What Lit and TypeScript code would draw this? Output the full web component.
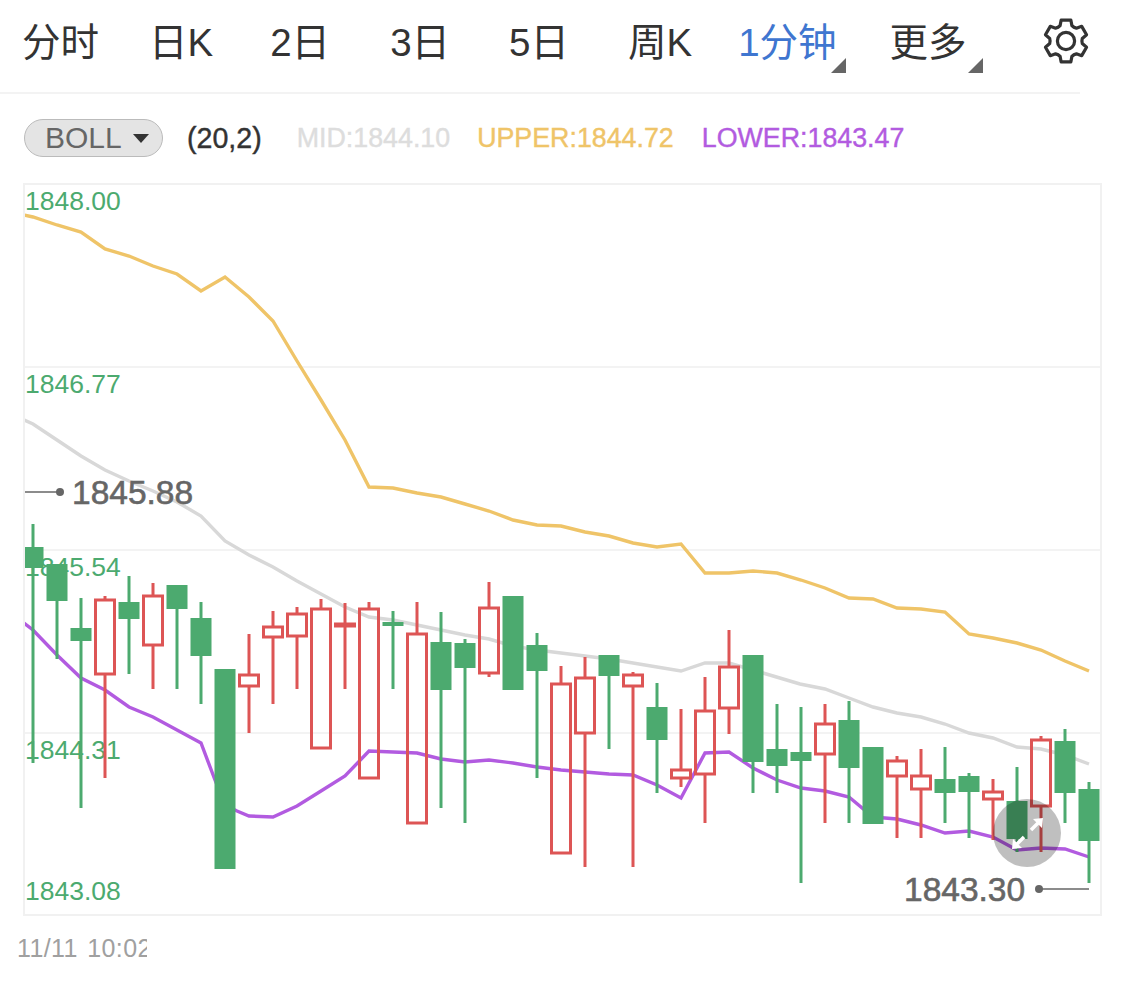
import { LitElement, html, svg, css } from "lit";
import { customElement } from "lit/decorators.js";

// wickTop, wickBottom, bodyTop, bodyBottom, up (red = hollow)
type Candle = [number, number, number, number, boolean];

const CANDLES: Candle[] = [
  [524, 763, 547, 568, false],
  [564, 659, 564, 601, false],
  [598, 808, 628, 641, false],
  [596, 778, 599, 675, true],
  [576, 674, 602, 619, false],
  [583, 689, 595, 646, true],
  [585, 689, 585, 609, false],
  [602, 704, 618, 656, false],
  [669, 869, 669, 869, false],
  [634, 733, 674, 687, true],
  [611, 704, 626, 638, true],
  [607, 689, 613, 637, true],
  [599, 749, 608, 749, true],
  [603, 689, 623, 627, true],
  [602, 779, 608, 779, true],
  [611, 689, 622, 626, false],
  [602, 824, 633, 824, true],
  [612, 808, 642, 690, false],
  [639, 823, 643, 668, false],
  [582, 677, 607, 674, true],
  [596, 690, 596, 690, false],
  [633, 778, 645, 671, false],
  [666, 854, 683, 854, true],
  [657, 867, 677, 734, true],
  [655, 749, 655, 676, false],
  [672, 867, 674, 687, true],
  [683, 793, 707, 740, false],
  [709, 787, 769, 779, true],
  [677, 823, 710, 775, true],
  [630, 734, 666, 709, true],
  [655, 793, 655, 762, false],
  [704, 793, 749, 766, false],
  [707, 883, 752, 761, false],
  [704, 823, 723, 755, true],
  [701, 823, 720, 768, false],
  [747, 824, 747, 824, false],
  [756, 838, 760, 777, true],
  [749, 838, 775, 790, true],
  [747, 823, 779, 793, false],
  [773, 838, 776, 792, false],
  [779, 840, 791, 800, true],
  [767, 852, 801, 839, false],
  [736, 852, 739, 807, true],
  [729, 823, 741, 793, false],
  [782, 883, 789, 841, false],
];

const UPPER =
  "24,215 33,217 57,225 81,232 105,249 129,256 153,266 177,274 201,291 225,277 249,297 273,321 297,361 321,400 345,440 369,487 393,488 417,493 441,497 465,504 489,511 513,520 537,525 561,526 585,532 609,536 633,543 657,547 681,544 705,573 729,573 753,571 777,573 801,580 825,588 849,598 873,599 897,608 921,609 945,612 969,634 993,638 1017,643 1041,650 1065,661 1089,671";
const MID =
  "24,420 33,424 57,440 81,456 105,470 129,481 153,491 177,502 201,516 225,541 249,555 273,567 297,581 321,594 345,607 369,617 393,620 417,625 441,630 465,635 489,639 513,646 537,650 561,653 585,656 609,659 633,663 657,667 681,671 705,663 729,663 763,673 800,684 825,689 849,698 873,707 897,713 921,717 945,724 969,733 993,738 1017,747 1041,749 1065,755 1089,764";
const LOWER =
  "24,623 33,630 57,655 81,678 105,690 129,707 153,717 177,730 201,743 215,780 225,805 237,811 249,816 273,817 297,806 321,791 345,776 369,751 393,752 417,753 441,759 465,762 489,760 513,763 537,767 561,770 585,772 609,774 633,775 657,785 681,798 705,753 729,752 753,768 777,780 801,788 825,791 849,797 873,817 897,819 921,825 945,833 969,831 993,837 1017,850 1041,848 1065,849 1089,857";

const AXIS: [number, string][] = [
  [210, "1848.00"],
  [393, "1846.77"],
  [576, "1845.54"],
  [759, "1844.31"],
  [900, "1843.08"],
];

function gearPath(cx: number, cy: number) {
  const pt = (r: number, deg: number) => {
    const a = (deg * Math.PI) / 180;
    return `${(cx + r * Math.cos(a)).toFixed(2)} ${(cy + r * Math.sin(a)).toFixed(2)}`;
  };
  let d = "";
  for (let i = 0; i < 6; i++) {
    const c = -90 + i * 60;
    d += `${i ? "L" : "M"}${pt(16.5, c - 21)} L${pt(21.5, c - 13)} L${pt(21.5, c + 13)} L${pt(16.5, c + 21)} Q${pt(15.5, c + 30)} ${pt(16.5, c + 39)} `;
  }
  return d + "Z";
}

@customElement("app-root")
export class AppRoot extends LitElement {
  static styles = css`
    :host {
      display: block;
      width: 1125px;
      height: 983px;
      background: #fff;
      font-family: "Liberation Sans", "Noto Sans CJK SC", sans-serif;
      overflow: hidden;
    }
    .tabs {
      display: flex;
      align-items: center;
      box-sizing: border-box;
      width: 1080px;
      height: 94px;
      padding: 0 0 10px 22px;
      border-bottom: 2px solid #f3f3f3;
      font-size: 38.5px;
      color: #333;
    }
    .tab {
      position: relative;
      margin-bottom: -4px;
      line-height: 44px;
      white-space: nowrap;
    }
    .tab.active {
      color: #3f76d0;
    }
    .tab.menu::after {
      content: "";
      position: absolute;
      right: -16px;
      bottom: -8px;
      width: 0;
      height: 0;
      border-style: solid;
      border-width: 0 0 15px 15px;
      border-color: transparent transparent #666 transparent;
    }
    .tab.active.menu::after {
      right: -9px;
    }
    .gear {
      display: block;
      flex: none;
      width: 46px;
      height: 48px;
      margin-left: 76px;
    }
    .legend {
      display: flex;
      align-items: center;
      height: 38px;
      margin: 25px 0 26px 24px;
      font-size: 26.8px;
      white-space: nowrap;
      -webkit-text-stroke: 0.4px;
    }
    .pill {
      display: flex;
      align-items: center;
      box-sizing: border-box;
      width: 139px;
      height: 38px;
      padding-left: 20px;
      border: 1px solid #bbb;
      border-radius: 19px;
      background: #e4e4e4;
      color: #666;
      font-size: 30px;
      -webkit-text-stroke: 0;
    }
    .caret {
      width: 0;
      height: 0;
      margin-left: 11px;
      border-style: solid;
      border-width: 9px 8px 0 8px;
      border-color: #333 transparent transparent transparent;
    }
    .params {
      margin-left: 24px;
      color: #333;
      font-size: 28.6px;
    }
    .mid {
      margin-left: 35px;
      color: #ddd;
    }
    .upper {
      margin-left: 27px;
      color: #efc468;
    }
    .lower {
      margin-left: 28px;
      color: #b25be0;
    }
    .chart {
      box-sizing: border-box;
      width: 1079px;
      height: 733px;
      margin-left: 23px;
      border: 2px solid #f1f1f1;
    }
    .chart svg {
      display: block;
      width: 1075px;
      height: 729px;
    }
    .axis {
      font-size: 26.5px;
      fill: #4caa6f;
    }
    .price {
      font-size: 33.5px;
      fill: #666;
      stroke: #666;
      stroke-width: 0.6px;
    }
    .date {
      width: 130px;
      margin: 18px 0 0 17px;
      overflow: hidden;
      white-space: nowrap;
      font-size: 25px;
      letter-spacing: 0.4px;
      word-spacing: 2px;
      color: #a0a0a0;
    }
  `;

  renderCandle(c: Candle, i: number) {
    const x = 33 + i * 24;
    const [wt, wb, bt, bb, up] = c;
    if (!up) {
      return svg`<path d="M${x} ${wt}V${wb}" stroke="#4caa6f" stroke-width="3" />
        <rect x=${x - 10.5} y=${bt} width="21" height=${bb - bt} fill="#4caa6f" />`;
    }
    // hollow body, the wick stops at its edges
    return svg`<path d="M${x} ${wt}V${bt}M${x} ${bb}V${wb}" stroke="#dd5555" stroke-width="3" />
      <rect x=${x - 9.5} y=${bt + 1} width="19" height=${bb - bt - 2} fill="none" stroke="#dd5555" stroke-width="3" />`;
  }

  render() {
    return html`
      <div class="tabs">
        <span class="tab" style="margin-right:50px">分时</span>
        <span class="tab" style="margin-right:57px">日K</span>
        <span class="tab" style="margin-right:60px">2日</span>
        <span class="tab" style="margin-right:59px">3日</span>
        <span class="tab" style="margin-right:59px">5日</span>
        <span class="tab" style="margin-right:46px">周K</span>
        <span class="tab active menu" style="margin-right:53px">1分钟</span>
        <span class="tab menu">更多</span>
        <svg class="gear" viewBox="0 0 46 48">
          <path d=${gearPath(23, 24)} fill="none" stroke="#333" stroke-width="3.2" stroke-linejoin="round" />
          <circle cx="23" cy="24" r="8.6" fill="none" stroke="#333" stroke-width="3.2" />
        </svg>
      </div>
      <div class="legend">
        <div class="pill">BOLL<span class="caret"></span></div>
        <span class="params">(20,2)</span>
        <span class="mid">MID:1844.10</span>
        <span class="upper">UPPER:1844.72</span>
        <span class="lower">LOWER:1843.47</span>
      </div>
      <div class="chart">
        <svg viewBox="25 185 1075 729">
          ${[367, 550, 733].map(
            (y) => svg`<path d="M25 ${y}H1100" stroke="#f3f3f3" stroke-width="2" />`
          )}
          ${AXIS.map(([y, t]) => svg`<text class="axis" x="25" y=${y}>${t}</text>`)}
          <polyline points=${UPPER} fill="none" stroke="#efc468" stroke-width="3.4" />
          <polyline points=${MID} fill="none" stroke="#d8d8d8" stroke-width="3.4" />
          <polyline points=${LOWER} fill="none" stroke="#b25be0" stroke-width="3.4" />
          ${CANDLES.map((c, i) => this.renderCandle(c, i))}
          <path d="M25 492H60" stroke="#666" stroke-width="1.5" />
          <circle cx="60" cy="492" r="4" fill="#666" />
          <text class="price" x="72" y="504">1845.88</text>
          <path d="M1039 889H1089" stroke="#666" stroke-width="1.5" />
          <circle cx="1039" cy="889" r="4" fill="#666" />
          <text class="price" x="904" y="901">1843.30</text>
          <circle cx="1027" cy="833" r="34" fill="rgba(0,0,0,0.25)" />
          <path d="M1024 837L1016 845M1031 830L1039 822" stroke="#fff" stroke-width="3.5" />
          <path d="M1012 849L1013 839L1022 848Z M1043 818L1042 828L1033 819Z" fill="#fff" />
        </svg>
      </div>
      <div class="date">11/11 10:02</div>
    `;
  }
}
